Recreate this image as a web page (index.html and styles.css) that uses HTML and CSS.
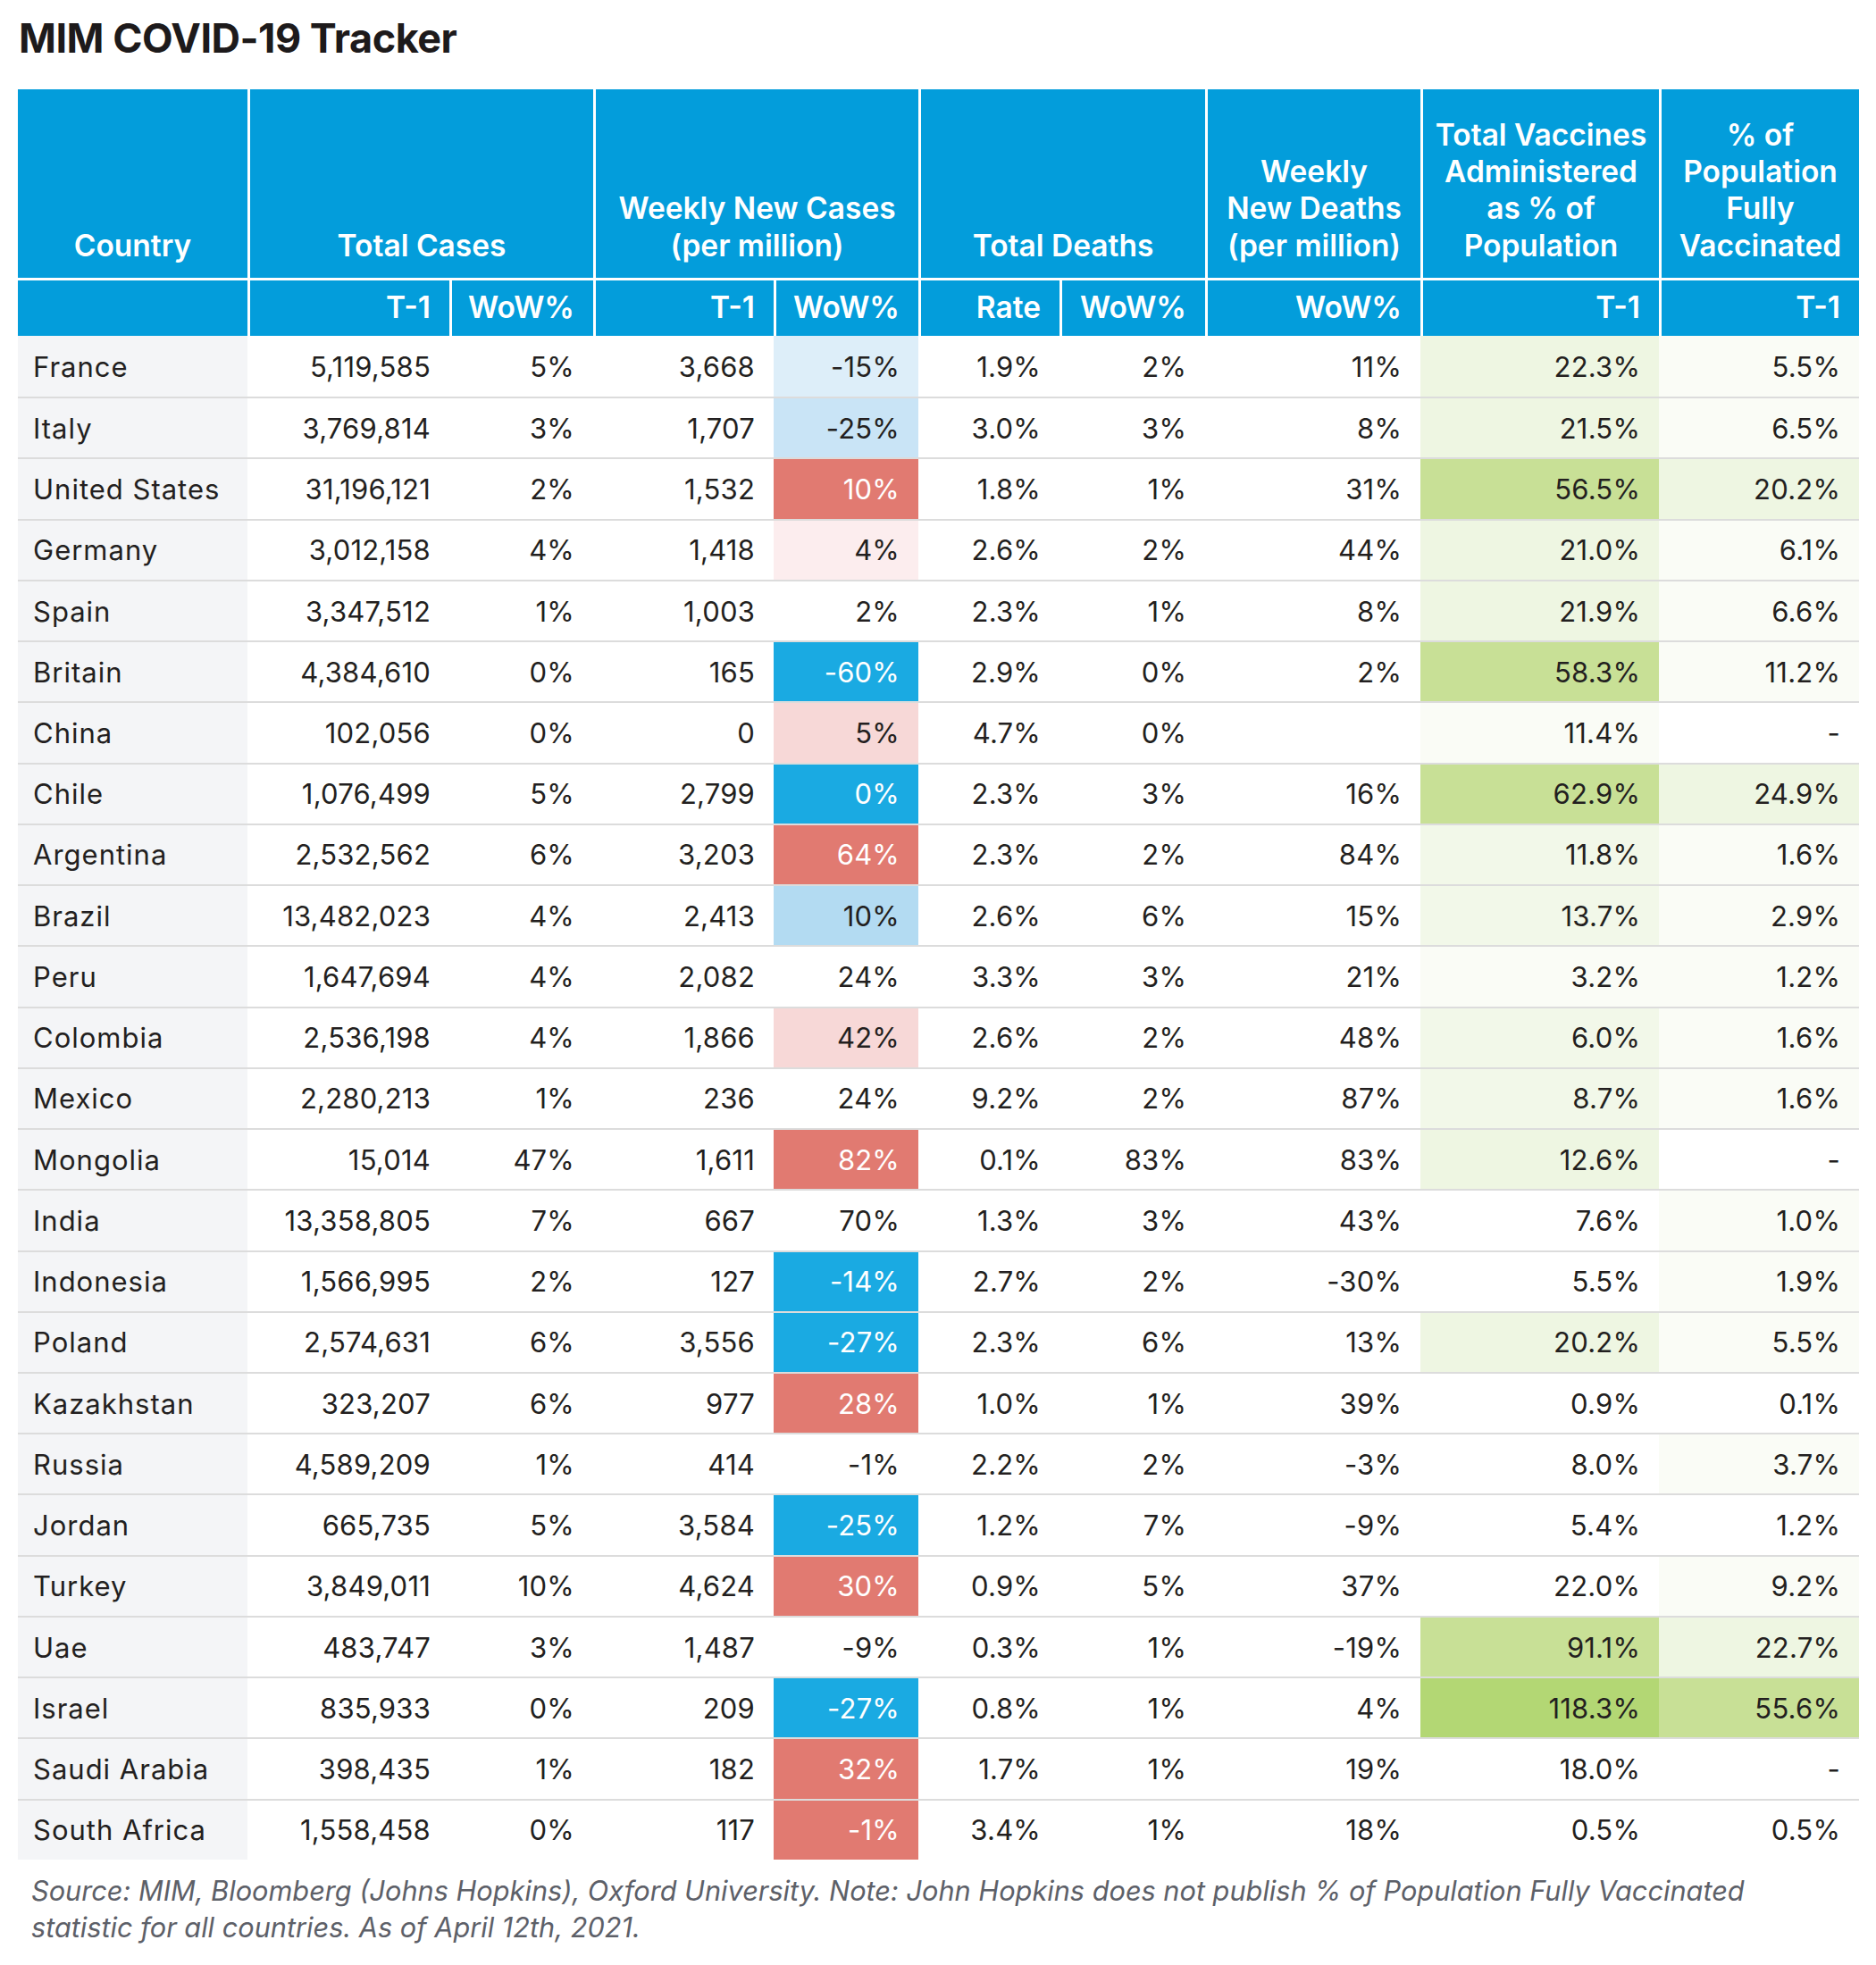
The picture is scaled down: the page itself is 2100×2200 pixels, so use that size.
FILE: index.html
```html
<!DOCTYPE html>
<html lang="en">
<head>
<meta charset="utf-8">
<title>MIM COVID-19 Tracker</title>
<link rel="stylesheet" href="styles.css">
</head>
<body>
<div class="page">
  <h1 class="title">MIM COVID-19 Tracker</h1>
  <table class="tracker">
    <colgroup>
      <col class="c-country"><col class="c-tc"><col class="c-tcw"><col class="c-wc"><col class="c-wcw"><col class="c-rate"><col class="c-rw"><col class="c-wd"><col class="c-vac"><col class="c-pop">
    </colgroup>
    <thead>
      <tr class="h1">
        <th class="hc">Country</th>
        <th colspan="2">Total Cases</th>
        <th colspan="2">Weekly New Cases<br>(per million)</th>
        <th colspan="2">Total Deaths</th>
        <th>Weekly<br>New Deaths<br>(per million)</th>
        <th>Total Vaccines<br>Administered<br>as % of<br>Population</th>
        <th>% of<br>Population<br>Fully<br>Vaccinated</th>
      </tr>
      <tr class="h2">
        <th class="hc"></th>
        <th>T-1</th><th>WoW%</th>
        <th>T-1</th><th>WoW%</th>
        <th>Rate</th><th>WoW%</th>
        <th>WoW%</th>
        <th>T-1</th>
        <th>T-1</th>
      </tr>
    </thead>
    <tbody>
      <tr><td>France</td><td>5,119,585</td><td>5%</td><td>3,668</td><td class="b1">-15%</td><td>1.9%</td><td>2%</td><td>11%</td><td class="g3">22.3%</td><td class="g1">5.5%</td></tr>
      <tr><td>Italy</td><td>3,769,814</td><td>3%</td><td>1,707</td><td class="b2">-25%</td><td>3.0%</td><td>3%</td><td>8%</td><td class="g3">21.5%</td><td class="g1">6.5%</td></tr>
      <tr><td>United States</td><td>31,196,121</td><td>2%</td><td>1,532</td><td class="r3">10%</td><td>1.8%</td><td>1%</td><td>31%</td><td class="g4">56.5%</td><td class="g3">20.2%</td></tr>
      <tr><td>Germany</td><td>3,012,158</td><td>4%</td><td>1,418</td><td class="r1">4%</td><td>2.6%</td><td>2%</td><td>44%</td><td class="g3">21.0%</td><td class="g1">6.1%</td></tr>
      <tr><td>Spain</td><td>3,347,512</td><td>1%</td><td>1,003</td><td>2%</td><td>2.3%</td><td>1%</td><td>8%</td><td class="g3">21.9%</td><td class="g1">6.6%</td></tr>
      <tr><td>Britain</td><td>4,384,610</td><td>0%</td><td>165</td><td class="b4">-60%</td><td>2.9%</td><td>0%</td><td>2%</td><td class="g4">58.3%</td><td class="g1">11.2%</td></tr>
      <tr><td>China</td><td>102,056</td><td>0%</td><td>0</td><td class="r2">5%</td><td>4.7%</td><td>0%</td><td></td><td class="g1">11.4%</td><td>-</td></tr>
      <tr><td>Chile</td><td>1,076,499</td><td>5%</td><td>2,799</td><td class="b4">0%</td><td>2.3%</td><td>3%</td><td>16%</td><td class="g4">62.9%</td><td class="g3">24.9%</td></tr>
      <tr><td>Argentina</td><td>2,532,562</td><td>6%</td><td>3,203</td><td class="r3">64%</td><td>2.3%</td><td>2%</td><td>84%</td><td class="g2">11.8%</td><td class="g1">1.6%</td></tr>
      <tr><td>Brazil</td><td>13,482,023</td><td>4%</td><td>2,413</td><td class="b3">10%</td><td>2.6%</td><td>6%</td><td>15%</td><td class="g2">13.7%</td><td class="g1">2.9%</td></tr>
      <tr><td>Peru</td><td>1,647,694</td><td>4%</td><td>2,082</td><td>24%</td><td>3.3%</td><td>3%</td><td>21%</td><td class="g1">3.2%</td><td class="g1">1.2%</td></tr>
      <tr><td>Colombia</td><td>2,536,198</td><td>4%</td><td>1,866</td><td class="r2">42%</td><td>2.6%</td><td>2%</td><td>48%</td><td class="g2">6.0%</td><td class="g1">1.6%</td></tr>
      <tr><td>Mexico</td><td>2,280,213</td><td>1%</td><td>236</td><td>24%</td><td>9.2%</td><td>2%</td><td>87%</td><td class="g2">8.7%</td><td class="g1">1.6%</td></tr>
      <tr><td>Mongolia</td><td>15,014</td><td>47%</td><td>1,611</td><td class="r3">82%</td><td>0.1%</td><td>83%</td><td>83%</td><td class="g3">12.6%</td><td>-</td></tr>
      <tr><td>India</td><td>13,358,805</td><td>7%</td><td>667</td><td>70%</td><td>1.3%</td><td>3%</td><td>43%</td><td>7.6%</td><td class="g1">1.0%</td></tr>
      <tr><td>Indonesia</td><td>1,566,995</td><td>2%</td><td>127</td><td class="b4">-14%</td><td>2.7%</td><td>2%</td><td>-30%</td><td>5.5%</td><td class="g1">1.9%</td></tr>
      <tr><td>Poland</td><td>2,574,631</td><td>6%</td><td>3,556</td><td class="b4">-27%</td><td>2.3%</td><td>6%</td><td>13%</td><td class="g3">20.2%</td><td class="g1">5.5%</td></tr>
      <tr><td>Kazakhstan</td><td>323,207</td><td>6%</td><td>977</td><td class="r3">28%</td><td>1.0%</td><td>1%</td><td>39%</td><td>0.9%</td><td>0.1%</td></tr>
      <tr><td>Russia</td><td>4,589,209</td><td>1%</td><td>414</td><td>-1%</td><td>2.2%</td><td>2%</td><td>-3%</td><td>8.0%</td><td class="g1">3.7%</td></tr>
      <tr><td>Jordan</td><td>665,735</td><td>5%</td><td>3,584</td><td class="b4">-25%</td><td>1.2%</td><td>7%</td><td>-9%</td><td>5.4%</td><td>1.2%</td></tr>
      <tr><td>Turkey</td><td>3,849,011</td><td>10%</td><td>4,624</td><td class="r3">30%</td><td>0.9%</td><td>5%</td><td>37%</td><td>22.0%</td><td class="g1">9.2%</td></tr>
      <tr><td>Uae</td><td>483,747</td><td>3%</td><td>1,487</td><td>-9%</td><td>0.3%</td><td>1%</td><td>-19%</td><td class="g4">91.1%</td><td class="g3">22.7%</td></tr>
      <tr><td>Israel</td><td>835,933</td><td>0%</td><td>209</td><td class="b4">-27%</td><td>0.8%</td><td>1%</td><td>4%</td><td class="g5">118.3%</td><td class="g4">55.6%</td></tr>
      <tr><td>Saudi Arabia</td><td>398,435</td><td>1%</td><td>182</td><td class="r3">32%</td><td>1.7%</td><td>1%</td><td>19%</td><td>18.0%</td><td>-</td></tr>
      <tr><td>South Africa</td><td>1,558,458</td><td>0%</td><td>117</td><td class="r3">-1%</td><td>3.4%</td><td>1%</td><td>18%</td><td>0.5%</td><td>0.5%</td></tr>
    </tbody>
  </table>
  <p class="note">Source: MIM, Bloomberg (Johns Hopkins), Oxford University. Note: John Hopkins does not publish % of Population Fully Vaccinated statistic for all countries. As of April 12th, 2021.</p>
</div>
</body>
</html>
```

FILE: styles.css
```css
html, body {
  margin: 0;
  padding: 0;
  background: #ffffff;
}

body {
  font-family: "Inter", "Liberation Sans", sans-serif;
  color: #231f20;
}

.page {
  padding: 14px 20px 0 20px;
}

.title {
  margin: 0 0 0 1px;
  height: 86px;
  font-size: 45px;
  line-height: 58px;
  font-weight: 700;
  letter-spacing: -0.5px;
  color: #1d1a1b;
}

.tracker {
  width: 2061px;
  table-layout: fixed;
  border-collapse: separate;
  border-spacing: 0;
}

.c-country { width: 257px; }
.c-tc { width: 226px; }
.c-tcw { width: 161px; }
.c-wc { width: 202px; }
.c-wcw { width: 162px; }
.c-rate { width: 158px; }
.c-rw { width: 163px; }
.c-wd { width: 241px; }
.c-vac { width: 267px; }
.c-pop { width: 224px; }

.tracker th {
  background: #039ddb;
  color: #ffffff;
  font-weight: 600;
  font-size: 33.5px;
  line-height: 41.3px;
  padding: 0;
  border-left: 3px solid #ffffff;
}

.tracker th.hc {
  border-left: 0;
}

.tracker .h1 th {
  height: 214px;
  vertical-align: bottom;
  text-align: center;
  padding-bottom: 15px;
  border-bottom: 3px solid #ffffff;
  box-sizing: border-box;
}

.tracker .h2 th {
  height: 62px;
  text-align: right;
  padding-right: 21px;
  vertical-align: middle;
}

.tracker td {
  height: 66.24px;
  padding: 0 21px 0 0;
  font-size: 31px;
  letter-spacing: 0.2px;
  text-align: right;
  vertical-align: middle;
  border-top: 2px solid #dcdcdc;
  white-space: nowrap;
}

.tracker tbody tr:first-child td {
  border-top: 0;
  height: 68.24px;
}

.tracker td:first-child {
  background: #f4f5f7;
  text-align: left;
  padding: 0 0 0 17px;
  letter-spacing: 1px;
}

.b1 { background: #ddeef9; }
.b2 { background: #c9e4f6; }
.b3 { background: #b3dbf2; }
.b4 { background: #1aaae2; color: #ffffff; }
.r1 { background: #fcedee; }
.r2 { background: #f7d8d7; }
.r3 { background: #e17a71; color: #ffffff; }

.g1 { background: #fafcf6; }
.g2 { background: #f2f8e9; }
.g3 { background: #eef6e2; }
.g4 { background: #c8e096; }
.g5 { background: #b3d774; }

.note {
  margin: 14px 0 0 15px;
  width: 1965px;
  font-size: 30.7px;
  line-height: 41px;
  font-style: italic;
  color: #5d6068;
}
```
